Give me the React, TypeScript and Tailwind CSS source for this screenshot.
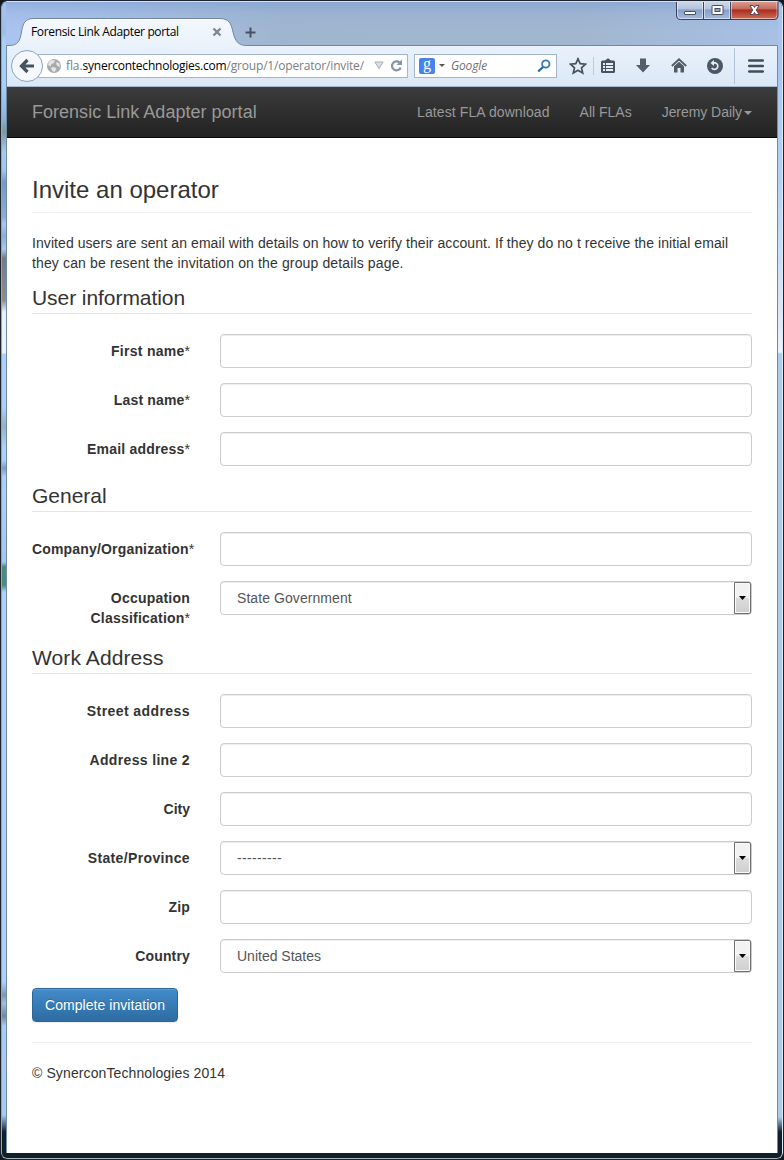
import React from "react";

function CaptionButtons() {
  return (
    <svg className="absolute -right-[2px] top-0 z-10 h-[21px] w-[104px]" viewBox="0 0 104 21">
      <defs>
        <linearGradient id="glass" x1="0" y1="0" x2="0" y2="1">
          <stop offset="0" stopColor="#d3ddea" />
          <stop offset=".47" stopColor="#b2c3dc" />
          <stop offset=".5" stopColor="#869fc8" />
          <stop offset="1" stopColor="#a6bbe0" />
        </linearGradient>
        <linearGradient id="close" x1="0" y1="0" x2="0" y2="1">
          <stop offset="0" stopColor="#dda99e" />
          <stop offset=".47" stopColor="#c5685a" />
          <stop offset=".5" stopColor="#a82c1d" />
          <stop offset="1" stopColor="#d0705a" />
        </linearGradient>
      </defs>
      <path d="M1.500 0V15Q1.500 19.500 5.500 19.500H56V0Z" fill="url(#glass)" />
      <path d="M56 0V19.500H99Q103 19.500 103 15V0Z" fill="url(#close)" />
      <path d="M2.500 1V15Q2.500 18.500 5.500 18.500H27.500V1.500H2.500M29.500 1.500V18.500H54.500V1.500ZM56.500 1.500V18.500H99Q102 18.500 102 15V1.500Z" fill="none" stroke="#fff" strokeOpacity=".5" />
      <path d="M1.500 0.500V15Q1.500 19.500 5.500 19.500H99Q103 19.500 103 15V0.500ZM28.500 0V19M55.500 0V19" fill="none" stroke="#39415c" />
      <rect x="9.500" y="11.500" width="11" height="3" rx=".5" fill="#fff" stroke="#474e66" />
      <rect x="37" y="5.500" width="11" height="9" rx=".5" fill="#fff" stroke="#474e66" />
      <rect x="40" y="8.500" width="5" height="3" fill="#8fa5cc" stroke="#474e66" />
      <path d="M75 5.500h3.200l1.300 2 1.300-2h3.200l-2.700 4.500 2.700 4.500h-3.200l-1.300-2-1.300 2h-3.200l2.700-4.500z" fill="#fff" stroke="#55475a" />
    </svg>
  );
}

function TitleBar() {
  return (
    <div className="relative flex h-[45px] shrink-0">
      <svg className="absolute left-0 top-0 h-[46px] w-full" viewBox="0 0 770 46" preserveAspectRatio="none">
        <defs>
          <linearGradient id="tab" x1="0" y1="0" x2="0" y2="1">
            <stop offset="0" stopColor="#f4f8fd" />
            <stop offset="1" stopColor="#eaf2fb" />
          </linearGradient>
        </defs>
        <path d="M0 46V45.500H2C11 45.500 13 41 14.500 32C16 23 18 18.500 27 18.500H212C222 18.500 224 23 226 32C228 41 231 45.500 240 45.500H770V46Z" fill="url(#tab)" />
        <path d="M22 20.500Q24 19.500 27 19.500H212Q216 19.500 218 20.500" fill="none" stroke="#fff" />
        <path d="M0 45.500H2C11 45.500 13 41 14.500 32C16 23 18 18.500 27 18.500H212C222 18.500 224 23 226 32C228 41 231 45.500 240 45.500H770" fill="none" stroke="#6e87a8" />
      </svg>
      <div className="relative flex h-full w-[250px] items-center pl-[24px] pt-[19px]">
        <span className="whitespace-nowrap text-[12px] leading-[16px] tracking-[-0.35px] text-black">Forensic Link Adapter portal</span>
        <svg className="ml-auto mr-[35px] size-[10px]" viewBox="0 0 10 10">
          <path d="M1.500 1.500L8.500 8.500M8.500 1.500L1.500 8.500" stroke="#7c8896" strokeWidth="2.400" />
        </svg>
      </div>
      <svg className="relative -ml-[12px] mt-[27px] size-[11px]" viewBox="0 0 11 11">
        <path d="M5.500 0.500V10.500M0.500 5.500H10.500" stroke="#47515f" strokeWidth="2" />
      </svg>
      <CaptionButtons />
    </div>
  );
}

function Toolbar() {
  return (
    <div className="flex h-[42px] shrink-0 items-center border-b border-[#a5b9cf] bg-gradient-to-b from-[#eaf2fb] to-[#dae8f7]">
      <div className="z-10 ml-[4px] flex size-[32px] shrink-0 items-center justify-center rounded-full border border-[#8ba3bf] bg-[#f4f8fc]">
        <svg className="size-[16px]" viewBox="0 0 16 16">
          <path d="M8.500 2L2.500 8L8.500 14M3 8H15" fill="none" stroke="#47525f" strokeWidth="3.200" />
        </svg>
      </div>
      <div className="-ml-[5px] flex h-[24px] w-[370px] items-center border border-[#a3b6ca] bg-white pl-[8px]">
        <svg className="size-[14px] shrink-0" viewBox="0 0 14 14">
          <circle cx="7" cy="7" r="7" fill="#a9aaac" />
          <path d="M4 1L8 1.500L7 4L4.500 5L3.500 7.500L1 6L1.500 3.500ZM9.500 3L12.500 4.500L13 8L10.500 7L9 5ZM4 8.500L7.500 8L9.500 10L7.500 13L5 12Z" fill="#e4e5e6" />
        </svg>
        <span className="ml-[5px] w-[308px] whitespace-nowrap text-[12px] leading-[16px] text-[#7d7d7d]">
          <span className="tracking-[-0.1px]">fla.</span>
          <span className="tracking-[-0.22px] text-black">synercontechnologies.com</span>
          <span className="tracking-[-0.18px]">/group/1/operator/invite/</span>
        </span>
        <svg className="h-[9px] w-[10px] shrink-0" viewBox="0 0 10 9">
          <path d="M.8 1H9.200L5 7.500Z" fill="#d9dfe6" stroke="#a6b0bb" />
        </svg>
        <svg className="ml-[6px] size-[13px] shrink-0" viewBox="0 0 13 13">
          <path d="M9.500 3.500A4.500 4.500 0 1 0 10.700 8.500" fill="none" stroke="#8794a2" strokeWidth="2.200" />
          <path d="M12 .5V6H6.500Z" fill="#8794a2" />
        </svg>
      </div>
      <div className="ml-[6px] flex h-[24px] w-[143px] items-center border border-[#a3b6ca] bg-white pl-[4px]">
        <div className="flex size-[16px] shrink-0 items-center justify-center rounded-[2px] bg-[#4683ef] pb-[4px] font-['Liberation_Serif',serif] text-[16px] leading-none text-white">g</div>
        <svg className="ml-[4px] h-[3px] w-[6px]" viewBox="0 0 6 3"><path d="M0 0H6L3 3Z" fill="#555" /></svg>
        <span className="ml-[6px] w-[86px] text-[12px] italic leading-[16px] tracking-[-0.15px] text-[#707070]">Google</span>
        <svg className="size-[14px] shrink-0" viewBox="0 0 14 14">
          <circle cx="8.800" cy="5" r="3.700" fill="none" stroke="#347bb8" strokeWidth="1.800" />
          <path d="M6 8L1.200 12.500" stroke="#2765a0" strokeWidth="2.200" />
        </svg>
      </div>
      <svg className="ml-[12px] size-[18px] shrink-0" viewBox="0 0 18 18">
        <path d="M9 1.800L11.200 6.700L16.500 7.200L12.500 10.800L13.700 16L9 13.200L4.300 16L5.500 10.800L1.500 7.200L6.800 6.700Z" fill="none" stroke="#48525e" strokeWidth="1.700" />
      </svg>
      <div className="ml-[6px] h-[18px] w-px bg-[#bccbdc]" />
      <svg className="ml-[7px] h-[16px] w-[14px] shrink-0" viewBox="0 0 14 16">
        <path d="M0 4Q0 2.500 1.500 2.500H4L7 .3L10 2.500H12.500Q14 2.500 14 4V13.500Q14 15 12.500 15H1.500Q0 15 0 13.500Z" fill="#48525e" />
        <path d="M2 5H4V7H2ZM5 5H12V7H5ZM2 8H4V10H2ZM5 8H12V10H5ZM2 11H4V13H2ZM5 11H12V13H5Z" fill="#e6eff9" />
      </svg>
      <svg className="ml-[21px] h-[15px] w-[14px] shrink-0" viewBox="0 0 14 15">
        <path d="M4 0.500H10V7H14L7 14.500L0 7H4Z" fill="#535e6a" />
      </svg>
      <svg className="ml-[21px] h-[15px] w-[16px] shrink-0" viewBox="0 0 16 15">
        <path d="M.8 8L8 1.300L15.200 8" fill="none" stroke="#505b67" strokeWidth="1.800" />
        <path d="M3 8.300L8 3.800L13 8.300V14.500H9.500V10H6.500V14.500H3Z" fill="#505b67" />
      </svg>
      <svg className="ml-[20px] size-[16px] shrink-0" viewBox="0 0 16 16">
        <circle cx="8" cy="8" r="8" fill="#4c5764" />
        <path d="M6 4.900H8.300A3.300 3.300 0 1 1 4.700 9.800" fill="none" stroke="#e6eef7" strokeWidth="1.600" />
        <path d="M3.500 5L7 2V8Z" fill="#e6eef7" />
      </svg>
      <div className="ml-[11px] h-[36px] w-px bg-[#b3c4d8]" />
      <svg className="ml-[13px] h-[14px] w-[16px] shrink-0" viewBox="0 0 16 14">
        <path d="M1.200 1.500H14.800M1.200 7H14.800M1.200 12.500H14.800" stroke="#434d59" strokeWidth="2.600" strokeLinecap="round" />
      </svg>
    </div>
  );
}

function SiteNav() {
  return (
    <nav className="flex h-[51px] shrink-0 items-center border-b border-[#080808] bg-gradient-to-b from-[#3c3c3c] to-[#222] px-[25px] text-[14px] text-[#999]">
      <span className="pt-px text-[18px] tracking-[0.02px]">Forensic Link Adapter portal</span>
      <div className="ml-auto flex items-center">
        <span className="mr-[30px] tracking-[0.09px]">Latest FLA download</span>
        <span className="mr-[30px]">All FLAs</span>
        <span className="flex items-center tracking-[-0.05px]">
          Jeremy Daily
          <svg className="ml-[2px] mt-[1px] h-[4px] w-[8px]" viewBox="0 0 8 4"><path d="M0 0H8L4 4Z" fill="#999" /></svg>
        </span>
      </div>
    </nav>
  );
}

type RowProps = {
  lines: string[];
  required?: boolean;
  value?: string;
  select?: boolean;
  wide?: boolean;
  labelClass?: string;
  valueClass?: string;
};

function Row({ lines, required, value, select, wide, labelClass = "", valueClass = "" }: RowProps) {
  return (
    <div className="mb-[15px] flex justify-between">
      <label className={(wide ? "w-[170px] text-left " : "w-[158px] text-right ") + "shrink-0 whitespace-nowrap pt-[7px] font-bold " + labelClass}>
        {lines.map((line, i) => (
          <span key={line} className="block h-[20px]">
            {line}
            {required && i === lines.length - 1 && <span className="font-normal tracking-normal">*</span>}
          </span>
        ))}
      </label>
      <div className="flex h-[34px] w-[532px] shrink-0 justify-between rounded-[4px] border border-[#ccc] bg-white text-[#555] shadow-[inset_0_1px_1px_rgba(0,0,0,0.075)]">
        <span className={"pl-[16px] leading-[32px] " + valueClass}>{value}</span>
        {select && (
          <span className="flex w-[17px] items-center justify-center rounded-r-[2px] border border-[#707070] bg-gradient-to-b from-[#f2f2f2] from-50% via-[#dddddd] via-50% to-[#cfcfcf] shadow-[inset_0_0_0_1px_#fafafa]">
            <svg className="h-[4px] w-[7px]" viewBox="0 0 7 4"><path d="M0 0H7L3.500 4Z" fill="#000" /></svg>
          </span>
        )}
      </div>
    </div>
  );
}

function Legend({ children, className = "" }: { children: React.ReactNode; className?: string }) {
  return <h2 className={"mb-[20px] h-[31px] border-b border-[#e5e5e5] text-[21px] leading-[30px] " + className}>{children}</h2>;
}

function Page() {
  return (
    <main className="flex-1 bg-white px-[25px] pt-[39px] text-[14px] leading-[20px] text-[#333]">
      <h1 className="mb-[20px] h-[36px] border-b border-[#eee] text-[24px] leading-[26px]">Invite an operator</h1>
      <p className="mb-[10px] whitespace-nowrap">
        <span className="tracking-[0.07px]">Invited users are sent an email with details on how to verify their account. If they do no t receive the initial email</span>
        <br />
        <span className="tracking-[0.135px]">they can be resent the invitation on the group details page.</span>
      </p>
      <Legend className="tracking-[-0.06px]">User information</Legend>
      <Row lines={["First name"]} required labelClass="tracking-[0.27px]" />
      <Row lines={["Last name"]} required labelClass="tracking-[0.16px]" />
      <Row lines={["Email address"]} required labelClass="tracking-[0.2px]" />
      <Legend>General</Legend>
      <Row lines={["Company/Organization"]} required wide labelClass="tracking-[0.17px]" />
      <Row lines={["Occupation", "Classification"]} required select value="State Government" labelClass="tracking-[0.22px]" valueClass="tracking-[0.07px]" />
      <Legend className="tracking-[0.1px]">Work Address</Legend>
      <Row lines={["Street address"]} labelClass="tracking-[0.42px]" />
      <Row lines={["Address line 2"]} labelClass="tracking-[0.34px]" />
      <Row lines={["City"]} />
      <Row lines={["State/Province"]} select value="---------" labelClass="tracking-[0.36px]" valueClass="tracking-[0.34px]" />
      <Row lines={["Zip"]} labelClass="tracking-[0.2px]" />
      <Row lines={["Country"]} select value="United States" labelClass="tracking-[0.16px]" />
      <button className="block h-[34px] w-[146px] rounded-[4px] border border-[#2b669a] bg-gradient-to-b from-[#428bca] to-[#2d6ca2] tracking-[0.05px] text-white shadow-[inset_0_1px_0_rgba(255,255,255,0.15),0_1px_1px_rgba(0,0,0,0.075)] [text-shadow:0_-1px_0_rgba(0,0,0,0.2)]">
        Complete invitation
      </button>
      <hr className="my-[20px] border-[#eee]" />
      <footer className="tracking-[0.11px]">© SynerconTechnologies 2014</footer>
    </main>
  );
}

export default function App() {
  return (
    <div className="h-[1160px] w-[784px] bg-[#101820]">
      <div className="h-full overflow-hidden rounded-[7px] border border-[#1c2430]">
        <div className="flex h-full flex-col overflow-hidden rounded-[6px] border border-t-[#d5e0f2] border-b-[#a9b4ba] border-l-[#8fa6c4] border-r-[#dfe9f5] bg-[#10202a]">
          <div className="flex min-h-0 flex-1">
            <div className="w-[4px] shrink-0 bg-[linear-gradient(180deg,#a8c2ec_0px,#a3bce4_30px,#a9d0f4_40px,#a9d0f4_84px,#8fb4d8_115px,#7d9a9e_130px,#a9c9ef_150px,#a5c4ea_168px,#7797c4_180px,#8fabd1_215px,#a9c9ef_222px,#8fabd1_234px,#a9c9ef_247px,#777982_256px,#8d8b92_298px,#e8f0fb_310px,#ecf3fc_351px,#aed0f8_352px,#aed0f8_405px,#96b0c0_424px,#aed0f8_445px,#aed0f8_458px,#8199bd_466px,#aed0f8_475px,#a5c7ee_560px,#4b8b78_565px,#4b8b78_583px,#aed0f8_590px,#aed0f8_980px,#8194ae_993px,#a5bddd_1001px,#77879e_1014px,#aacbf1_1024px,#a9c9ed_1113px,#10202a_1130px)]" />
            <div className="flex w-[772px] shrink-0 flex-col">
              <div className="-mt-[2px] bg-[linear-gradient(180deg,rgba(115,150,210,0.5)_0px,rgba(140,170,215,0.25)_14px,transparent_30px),linear-gradient(90deg,#abc4ef_0%,#a8c0e6_12%,#a0b6d0_35%,#a2b6cf_75%,#a7c0e4_100%)] px-px font-['Open_Sans',sans-serif]">
                <TitleBar />
              </div>
              <div className="flex flex-1 flex-col border-x border-[#708ba8] font-['Liberation_Sans',Arial,sans-serif]">
                <div className="font-['Open_Sans',sans-serif]">
                  <Toolbar />
                </div>
                <SiteNav />
                <Page />
              </div>
            </div>
            <div className="flex-1 bg-[linear-gradient(180deg,#a8c2ec_0px,#abc6ed_80px,#a9caf0_86px,#b4d1f3_180px,#dfe9f8_325px,#eef3fb_350px,#adcbeb_352px,#adcbeb_1115px,#10202a_1130px)]" />
          </div>
          <div className="h-[5px] shrink-0" />
        </div>
      </div>
      </div>
  );
}
